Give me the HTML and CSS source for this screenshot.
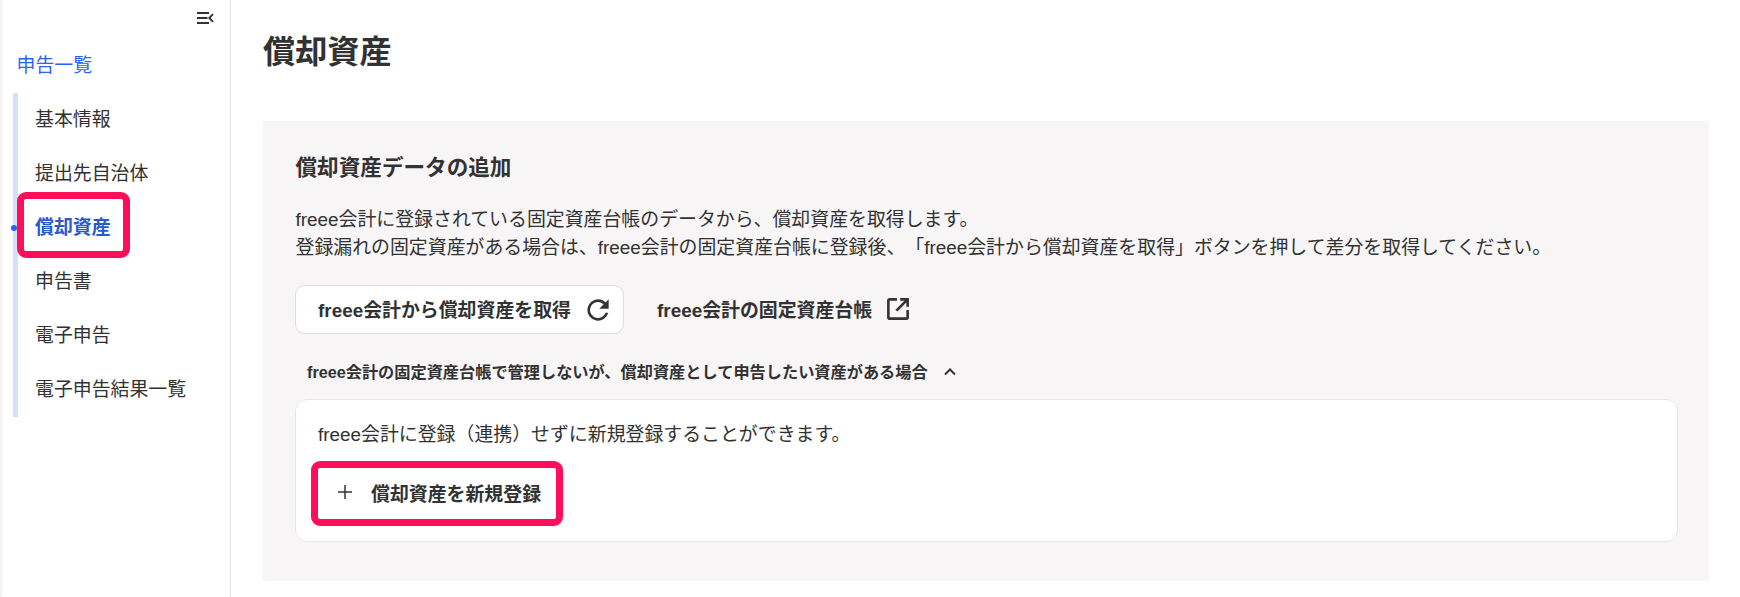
FILE: index.html
```html
<!DOCTYPE html>
<html lang="ja">
<head>
<meta charset="utf-8">
<title>償却資産</title>
<link rel="stylesheet" href="styles.css">
</head>
<body>
<div class="app">
  <aside class="sidebar">
    <div class="collapse-row">
      <svg class="collapse-icon" width="18" height="14" viewBox="0 0 18 14" fill="none" stroke="#333" stroke-width="1.9"><path d="M1 2h12M1 7h10.500M1 12h12"/><path d="M17 3.200 13.300 7l3.700 3.800"/></svg>
    </div>
    <a class="top-link">申告一覧</a>
    <ul class="steps">
      <li class="step">基本情報</li>
      <li class="step">提出先自治体</li>
      <li class="step step-active"><span class="dot"></span><span class="mark-wrap">償却資産<span class="mark mark-nav"></span></span></li>
      <li class="step">申告書</li>
      <li class="step">電子申告</li>
      <li class="step">電子申告結果一覧</li>
    </ul>
  </aside>
  <main class="main">
    <h1 class="title">償却資産</h1>
    <section class="panel">
      <h2 class="panel-title">償却資産データの追加</h2>
      <p class="desc">freee会計に登録されている固定資産台帳のデータから、償却資産を取得します。<br>登録漏れの固定資産がある場合は、freee会計の固定資産台帳に登録後、「freee会計から償却資産を取得」ボタンを押して差分を取得してください。</p>
      <div class="actions">
        <button class="btn btn-outline"><span class="btn-label">freee会計から償却資産を取得</span>
          <svg width="32" height="32" viewBox="0 0 24 24" fill="#333"><path d="M17.650 6.350A7.960 7.960 0 0 0 12 4a8 8 0 1 0 7.730 10h-2.080A6 6 0 1 1 12 6c1.660 0 3.140.69 4.220 1.780L13 11h7V4l-2.350 2.350z"/></svg>
        </button>
        <a class="btn btn-link"><span class="btn-label">freee会計の固定資産台帳</span>
          <svg class="ext-icon" width="26" height="26" viewBox="0 0 24 24" fill="none" stroke="#333" stroke-width="2.400"><path d="M11 3.100H4.500a1.400 1.400 0 0 0-1.400 1.400v15a1.400 1.400 0 0 0 1.400 1.400h15a1.400 1.400 0 0 0 1.400-1.400V13"/><path d="M14 3.100h6.900V10M20.900 3.100 10.500 13.500"/></svg>
        </a>
      </div>
      <div class="disclosure">
        <span>freee会計の固定資産台帳で管理しないが、償却資産として申告したい資産がある場合</span>
        <svg width="14" height="10" viewBox="0 0 14 10" fill="none" stroke="#333" stroke-width="2"><path d="M2 7.500 7 2.500l5 5"/></svg>
      </div>
      <div class="card">
        <p class="card-text">freee会計に登録（連携）せずに新規登録することができます。</p>
        <button class="btn-add">
          <svg width="16" height="16" viewBox="0 0 16 16" fill="none" stroke="#333" stroke-width="1.500"><path d="M1 8h14M8 1v14"/></svg>
          <span>償却資産を新規登録</span>
          <span class="mark mark-add"></span>
        </button>
      </div>
    </section>
  </main>
</div>
</body>
</html>
```
FILE: styles.css
```css
* { box-sizing: border-box; }
html, body { margin: 0; height: 597px; overflow: hidden; background: #fff; }
body {
  font-family: "Liberation Sans", "Noto Sans CJK JP", sans-serif;
  font-size: 18.9px;
  color: #323232;
  text-spacing-trim: space-all;
}
.app { display: flex; height: 597px; }
.sidebar {
  width: 231px;
  flex: none;
  border-right: 1px solid #e4e4e4;
  background: linear-gradient(to right, #f2f2f2 0, #fff 4px);
}
.collapse-row { display: flex; justify-content: flex-end; padding: 11px 16px 0 0; height: 26px; }
.top-link { display: block; margin: 26px 0 0 16.500px; height: 41px; line-height: 28px; color: #2864f0; }
.steps { list-style: none; margin: 0 0 0 13px; padding: 0; border-left: 5px solid #d2e1fd; }
.step { position: relative; height: 54px; line-height: 54px; padding-left: 17px; white-space: nowrap; }
.step-active { color: #285ac8; font-weight: 700; }
.dot { position: absolute; left: -7px; top: 24px; width: 6px; height: 6px; border-radius: 50%; background: #2864f0; }
.mark-wrap { position: relative; display: inline-block; }
.mark { position: absolute; border: 7px solid #ff0f5a; border-radius: 9px; pointer-events: none; }
.mark-nav { left: -18px; right: -19px; top: -9px; bottom: -3px; }
.main { flex: 1; min-width: 0; padding: 0 31px 0 32px; }
.title { margin: 0; height: 121px; padding-top: 30px; font-size: 32.200px; line-height: 44px; font-weight: 700; }
.panel { height: 460px; background: #f7f5f5; padding: 32px 32px 0; }
.panel-title { margin: 0 0 0 .5px; font-size: 21.600px; line-height: 30px; font-weight: 700; }
.desc { margin: 23px 0 0 .5px; line-height: 28px; white-space: nowrap; }
.actions { display: flex; align-items: center; margin-top: 23px; }
.btn {
  display: inline-flex; align-items: center; gap: 11px;
  font: inherit; font-weight: 700; color: #323232; height: 49px; white-space: nowrap;
}
.btn-label { position: relative; top: -1px; }
.ext-icon { position: relative; top: -1px; }
.btn-outline { width: 329px; padding: 0 0 0 22px; background: #fff; border: 1px solid #dcdcdc; border-radius: 10px; }
.btn-link { margin-left: 33px; gap: 13px; }
.disclosure { display: flex; align-items: center; gap: 15px; margin: 25px 0 0 12px; height: 26px; font-size: 16.200px; line-height: 26px; font-weight: 700; white-space: nowrap; }
.card {
  margin: 14px -1px 0 0; height: 143px; background: #fff;
  border: 1px solid #e6e6e6; border-radius: 12px; padding: 20px 22px 0;
}
.card-text { margin: 0; line-height: 30px; }
.btn-add {
  position: relative; display: inline-flex; align-items: center; gap: 18px;
  margin-top: 17px; height: 50px; padding: 0 0 0 19px;
  background: none; border: 0; font: inherit; font-weight: 700; color: #323232;
}
.mark-add { left: -7px; right: -22px; top: -6px; bottom: -9px; }
```
